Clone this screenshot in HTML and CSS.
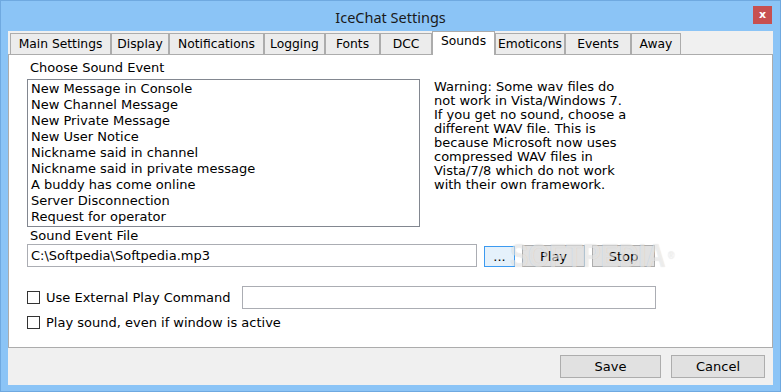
FILE: index.html
```html
<!DOCTYPE html>
<html lang="en">
<head>
    <meta charset="UTF-8">
    <title>IceChat Settings</title>
    <link rel="stylesheet" href="styles.css">
</head>
<body>
    <div class="window">
        <div class="titlebar">
            <span class="title">IceChat Settings</span>
            <span class="close">x</span>
        </div>

        <div class="client">
            <div class="tabs">
                <div class="tab">Main Settings</div>
                <div class="tab">Display</div>
                <div class="tab">Notifications</div>
                <div class="tab">Logging</div>
                <div class="tab">Fonts</div>
                <div class="tab">DCC</div>
                <div class="tab active">Sounds</div>
                <div class="tab">Emoticons</div>
                <div class="tab">Events</div>
                <div class="tab">Away</div>
            </div>

            <div class="page">
                <div class="events">
                    <div class="event-col">
                        <div class="label">Choose Sound Event</div>
                        <ul class="listbox">
                            <li>New Message in Console</li>
                            <li>New Channel Message</li>
                            <li>New Private Message</li>
                            <li>New User Notice</li>
                            <li>Nickname said in channel</li>
                            <li>Nickname said in private message</li>
                            <li>A buddy has come online</li>
                            <li>Server Disconnection</li>
                            <li>Request for operator</li>
                        </ul>
                    </div>
                    <p class="warning">
                        Warning: Some wav files do<br>
                        not work in Vista/Windows 7.<br>
                        If you get no sound, choose a<br>
                        different WAV file. This is<br>
                        because Microsoft now uses<br>
                        compressed WAV files in<br>
                        Vista/7/8 which do not work<br>
                        with their own framework.
                    </p>
                </div>

                <div class="label file-label">Sound Event File</div>
                <div class="file-row">
                    <div class="textbox file-path">C:\Softpedia\Softpedia.mp3</div>
                    <button class="btn browse">...</button>
                    <button class="btn small play">Play</button>
                    <button class="btn small">Stop</button>
                    <span class="watermark">SOFTPEDIA<sup>®</sup></span>
                </div>

                <div class="check-row first">
                    <span class="checkbox"></span>
                    <span class="check-label">Use External Play Command</span>
                    <div class="textbox command"></div>
                </div>
                <div class="check-row">
                    <span class="checkbox"></span>
                    <span class="check-label">Play sound, even if window is active</span>
                </div>
            </div>

            <div class="footer">
                <button class="btn dialog save">Save</button>
                <button class="btn dialog cancel">Cancel</button>
            </div>
        </div>
    </div>
</body>
</html>
```

FILE: styles.css
```css
body {
    margin: 0;
    font-family: "DejaVu Sans", Verdana, sans-serif;
    font-size: 13px;
    color: #000;
}
.window {
    width: 781px;
    height: 392px;
    box-sizing: border-box;
    background: #8bc4f6;
    border: 1px solid #6fa9e0;
    display: flex;
    flex-direction: column;
}

/* title bar */
.titlebar {
    height: 30px;
    position: relative;
    display: flex;
    align-items: center;
    justify-content: center;
}
.title {
    font-family: "Noto Sans", "Open Sans", sans-serif;
    font-size: 14.5px;
    color: #1a1a1a;
    padding-top: 1px;
}
.close {
    position: absolute;
    top: 5px;
    right: 8px;
    width: 19px;
    height: 18px;
    background: #c75050;
    color: #fff;
    font-weight: bold;
    font-size: 11px;
    line-height: 17px;
    text-align: center;
}

/* client area */
.client {
    flex: 1;
    margin: 0 7px 6px 7px;
    background: #f0f0f0;
    display: flex;
    flex-direction: column;
}
.tabs {
    height: 23px;
    padding-left: 2px;
    display: grid;
    grid-template-columns: 101px 58px 95px 61px 55px 52px 63px 70px 66px 50px;
}
.tab {
    align-self: end;
    height: 21px;
    box-sizing: border-box;
    border: 1px solid #acacac;
    border-bottom: none;
    background: #ececec;
    font-size: 12.3px;
    line-height: 20px;
    text-align: center;
    white-space: nowrap;
}
.tab.active {
    height: 24px;
    margin-bottom: -1px;
    background: #fff;
    line-height: 19px;
    position: relative;
    z-index: 1;
}
.page {
    height: 294px;
    box-sizing: border-box;
    border: 1px solid #acacac;
    background: #fff;
    padding: 5px 0 0 18px;
}

.events {
    display: flex;
}
.label {
    line-height: 16px;
    padding-left: 3px;
}
.listbox {
    list-style: none;
    margin: 3px 0 0;
    width: 393px;
    height: 148px;
    box-sizing: border-box;
    border: 1px solid #828790;
    padding: 1px 3px 0;
}
.listbox li {
    line-height: 16px;
    white-space: nowrap;
}
.warning {
    margin: 20px 0 0 14px;
    line-height: 14px;
}
.file-label {
    margin-top: 1px;
}

.file-row {
    display: flex;
    align-items: flex-start;
    position: relative;
}
.textbox {
    height: 23px;
    box-sizing: border-box;
    border: 1px solid #abadb3;
    background: #fff;
    padding: 0 3px;
    line-height: 21px;
}
.file-path {
    width: 450px;
}
.btn {
    font: inherit;
    color: #000;
    padding: 0;
    box-sizing: border-box;
    border: 1px solid #adadad;
    background: #e1e1e1;
}
.browse {
    width: 31px;
    height: 21px;
    margin: 2px 0 0 7px;
    border-color: #3c9af0;
    background: #e5f1fb;
    line-height: 14px;
}
.small {
    width: 63px;
    height: 22px;
    margin: 1px 0 0 7px;
}

/* faint site watermark over the buttons */
.watermark {
    position: absolute;
    left: 483px;
    top: -6px;
    font-family: "Liberation Sans", Arial, sans-serif;
    font-weight: bold;
    font-size: 34px;
    line-height: 34px;
    color: rgba(255, 255, 255, 0.55);
    text-shadow: 0 0 1px rgba(0, 0, 0, 0.16);
    transform: scaleX(0.8);
    transform-origin: left top;
    pointer-events: none;
}
.watermark sup {
    font-size: 11px;
    vertical-align: top;
    margin-left: 3px;
}

.check-row {
    display: flex;
    align-items: center;
    height: 16px;
    margin-top: 5px;
}
.check-row.first {
    height: 23px;
    margin-top: 19px;
}
.checkbox {
    width: 13px;
    height: 13px;
    box-sizing: border-box;
    border: 1px solid #333;
    background: #fff;
    margin-right: 6px;
}
.check-row.first .check-label {
    width: 196px;
}
.command {
    width: 414px;
}

.footer {
    flex: 1;
    display: flex;
    justify-content: flex-end;
    align-items: flex-start;
    gap: 10px;
    padding: 7px 8px 0 0;
}
.dialog {
    height: 23px;
}
.save {
    width: 101px;
}
.cancel {
    width: 94px;
}
```
